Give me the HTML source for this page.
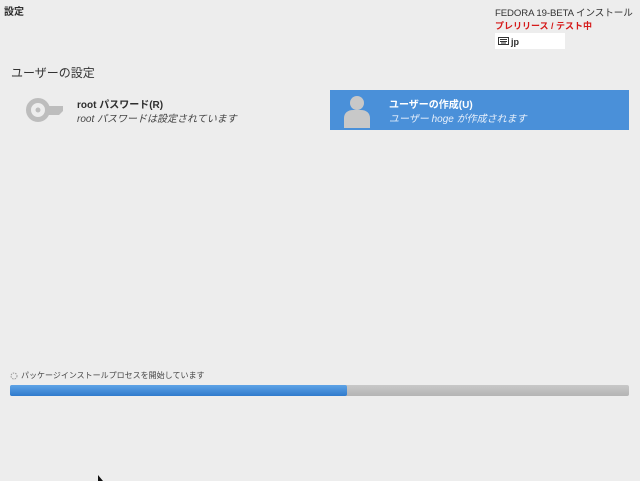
<!DOCTYPE html>
<html><head><meta charset="utf-8"><style>
body{margin:0;width:640px;height:480px;background:#ededed;font-family:"Liberation Sans","Noto Sans CJK JP",sans-serif;position:relative;overflow:hidden;color:#2e2e2e}
.a{position:absolute;white-space:nowrap}
</style></head><body>
<div class="a" style="left:4px;top:3px;font-size:10px;font-weight:bold">設定</div>
<div class="a" style="left:495px;top:5px;font-size:9.6px;color:#333;letter-spacing:-0.1px">FEDORA 19-BETA インストール</div>
<div class="a" style="left:495px;top:19px;font-size:9px;font-weight:bold;color:#d51a1a">プレリリース / テスト中</div>
<div class="a" style="left:495px;top:33px;width:70px;height:16px;background:#fff"></div>
<svg class="a" style="left:498px;top:37px" width="11" height="8"><rect x="0.5" y="0.5" width="10" height="7" fill="none" stroke="#333"/><path d="M2 2.5h7M2 4.5h7M3 6h5" stroke="#333" stroke-width="1"/></svg>
<div class="a" style="left:511px;top:37px;font-size:9px;font-weight:bold">jp</div>
<div class="a" style="left:11px;top:64px;font-size:12px;color:#333">ユーザーの設定</div>
<svg class="a" style="left:25px;top:97px" width="40" height="26"><circle cx="13" cy="13" r="9.5" fill="none" stroke="#bdbdbd" stroke-width="5"/><circle cx="13" cy="13" r="2.5" fill="#bdbdbd"/><path d="M21 9h17v5l-4 4H21z" fill="#bdbdbd"/></svg>
<div class="a" style="left:77px;top:96px;font-size:10px;font-weight:bold">root パスワード(R)</div>
<div class="a" style="left:77px;top:110px;font-size:10px;font-style:italic;color:#444">root パスワードは設定されています</div>
<div class="a" style="left:330px;top:90px;width:299px;height:40px;background:#4a90d9"></div>
<svg class="a" style="left:343px;top:94px" width="28" height="34"><circle cx="14" cy="9" r="7" fill="#c8c8c8"/><path d="M1 34V24c0-5 4-8 9-8h8c5 0 9 3 9 8v10z" fill="#c8c8c8"/></svg>
<div class="a" style="left:389px;top:96px;font-size:10px;font-weight:bold;color:#fff">ユーザーの作成(U)</div>
<div class="a" style="left:389px;top:110px;font-size:10px;font-style:italic;color:#e8f0fb">ユーザー hoge が作成されます</div>
<svg class="a" style="left:10px;top:372px" width="8" height="8"><circle cx="4" cy="4" r="3" fill="none" stroke="#999" stroke-width="1" stroke-dasharray="1.5 1"/></svg>
<div class="a" style="left:21px;top:370px;font-size:8px;color:#444">パッケージインストールプロセスを開始しています</div>
<div class="a" style="left:10px;top:385px;width:619px;height:11px;background:linear-gradient(#c8c8c8,#b4b4b4);border-radius:2px"></div>
<div class="a" style="left:10px;top:385px;width:337px;height:11px;background:linear-gradient(#5ea3e6,#2f7acc);border-radius:2px"></div>
<svg class="a" style="left:98px;top:475px" width="8" height="6"><path d="M0 0v6h5z" fill="#111"/></svg>
</body></html>
